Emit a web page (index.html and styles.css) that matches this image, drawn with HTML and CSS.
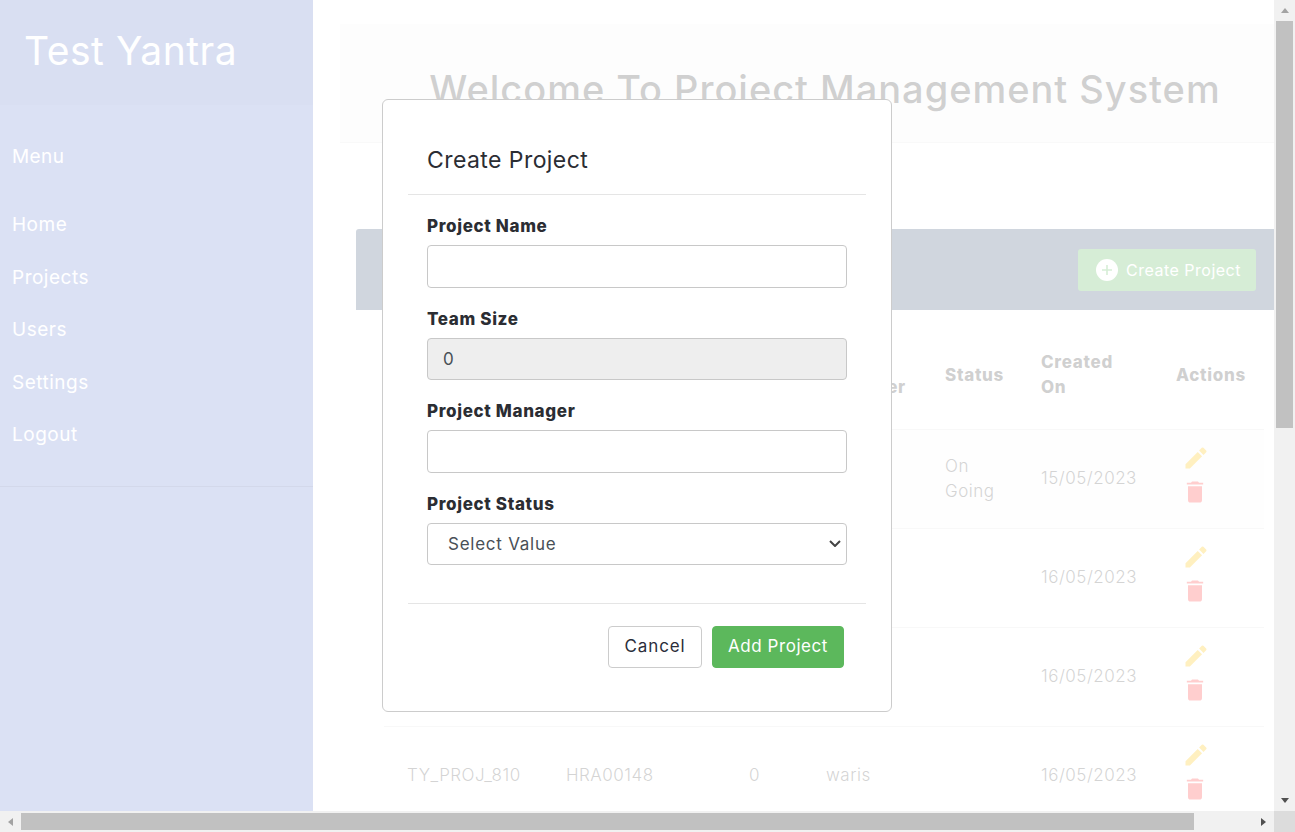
FILE: index.html
```html
<!DOCTYPE html>
<html lang="en">
<head>
<meta charset="utf-8">
<title>Project Management System</title>
<link rel="stylesheet" href="styles.css">
</head>
<body>
<div class="window">
  <div class="viewport">
    <div class="page">
      <aside class="sidebar">
        <div class="brand">Test Yantra</div>
        <nav class="nav">
          <div class="nav-label">Menu</div>
          <a class="nav-item">Home</a>
          <a class="nav-item">Projects</a>
          <a class="nav-item">Users</a>
          <a class="nav-item">Settings</a>
          <a class="nav-item">Logout</a>
        </nav>
      </aside>
      <main class="main">
        <header class="welcome"><h1>Welcome To Project Management System</h1></header>
        <section class="panel">
          <div class="panel-bar">
            <h2>All Projects</h2>
            <button class="create-btn">
              <svg class="plus" viewBox="0 0 22 22"><circle cx="11" cy="11" r="11" fill="#fff"/><path d="M11 6v10M6 11h10" stroke="#5cb85c" stroke-width="1.6"/></svg>
              Create Project
            </button>
          </div>
          <table class="table">
            <thead>
              <tr><th>Project Id</th><th>Project Name</th><th>Team Size</th><th>Project Manager</th><th>Status</th><th>Created On</th><th>Actions</th></tr>
            </thead>
            <tbody>
              <tr><td>TY_PROJ_807</td><td>HRA00145</td><td>0</td><td>waris</td><td>On Going</td><td>15/05/2023</td><td class="actions"><svg viewBox="0 0 24 24" class="edit"><path d="M3 17.25V21h3.75L17.2 10.55l-3.75-3.75zM20.7 7.04a1 1 0 0 0 0-1.41l-2.33-2.34a1 1 0 0 0-1.41 0l-2.3 2.3 3.75 3.75z"/></svg><svg viewBox="0 0 24 24" class="trash"><path d="M6 19c0 1.1.9 2 2 2h8c1.100 0 2-.9 2-2V7H6zM19 4h-3.500l-1-1h-5l-1 1H5v1.500h14z"/></svg></td></tr>
              <tr><td>TY_PROJ_808</td><td>HRA00146</td><td>0</td><td>waris</td><td></td><td>16/05/2023</td><td class="actions"><svg viewBox="0 0 24 24" class="edit"><path d="M3 17.25V21h3.75L17.2 10.55l-3.75-3.75zM20.7 7.04a1 1 0 0 0 0-1.41l-2.33-2.34a1 1 0 0 0-1.41 0l-2.3 2.3 3.75 3.75z"/></svg><svg viewBox="0 0 24 24" class="trash"><path d="M6 19c0 1.1.9 2 2 2h8c1.100 0 2-.9 2-2V7H6zM19 4h-3.500l-1-1h-5l-1 1H5v1.500h14z"/></svg></td></tr>
              <tr><td>TY_PROJ_809</td><td>HRA00147</td><td>0</td><td>waris</td><td></td><td>16/05/2023</td><td class="actions"><svg viewBox="0 0 24 24" class="edit"><path d="M3 17.25V21h3.75L17.2 10.55l-3.75-3.75zM20.7 7.04a1 1 0 0 0 0-1.41l-2.33-2.34a1 1 0 0 0-1.41 0l-2.3 2.3 3.75 3.75z"/></svg><svg viewBox="0 0 24 24" class="trash"><path d="M6 19c0 1.1.9 2 2 2h8c1.100 0 2-.9 2-2V7H6zM19 4h-3.500l-1-1h-5l-1 1H5v1.500h14z"/></svg></td></tr>
              <tr><td>TY_PROJ_810</td><td>HRA00148</td><td>0</td><td>waris</td><td></td><td>16/05/2023</td><td class="actions"><svg viewBox="0 0 24 24" class="edit"><path d="M3 17.25V21h3.75L17.2 10.55l-3.75-3.75zM20.7 7.04a1 1 0 0 0 0-1.41l-2.33-2.34a1 1 0 0 0-1.41 0l-2.3 2.3 3.75 3.75z"/></svg><svg viewBox="0 0 24 24" class="trash"><path d="M6 19c0 1.1.9 2 2 2h8c1.100 0 2-.9 2-2V7H6zM19 4h-3.500l-1-1h-5l-1 1H5v1.500h14z"/></svg></td></tr>
            </tbody>
          </table>
        </section>
      </main>
    </div>
    <div class="backdrop"></div>
    <div class="modal-wrap">
      <form class="modal">
        <div class="modal-head"><h3>Create Project</h3></div>
        <div class="modal-body">
          <div class="group"><label>Project Name</label><input class="field" type="text"></div>
          <div class="group"><label>Team Size</label><input class="field readonly" type="text" value="0" readonly></div>
          <div class="group"><label>Project Manager</label><input class="field" type="text"></div>
          <div class="group"><label>Project Status</label><select class="field select"><option>Select Value</option></select></div>
        </div>
        <div class="modal-foot">
          <button type="button" class="btn cancel">Cancel</button>
          <button type="button" class="btn add">Add Project</button>
        </div>
      </form>
    </div>
  </div>
  <div class="vbar">
    <span class="arrow up"></span>
    <span class="vthumb"></span>
    <span class="arrow down"></span>
  </div>
  <div class="hbar">
    <span class="arrow left"></span>
    <span class="hthumb"></span>
    <span class="arrow right"></span>
  </div>
  <div class="corner"></div>
</div>
</body>
</html>
```
FILE: styles.css
```css
* { box-sizing: border-box; }
html, body { margin: 0; height: 100%; overflow: hidden; }
body { font-family: "Inter", "Open Sans", sans-serif; color: #212529; background: #fff; }

.window {
  display: grid;
  grid-template-columns: 1274px 21px;
  grid-template-rows: 811px 21px;
  width: 1295px;
  height: 832px;
}
.viewport { position: relative; overflow: hidden; background: #fff; }
.page { display: flex; height: 100%; }

/* Sidebar */
.sidebar { flex: 0 0 313px; background: #6f87d3; color: #fff; }
.brand {
  height: 105px;
  padding: 28px 0 0 24px;
  background: #6780cb;
  font-size: 39px;
  line-height: 46px;
  letter-spacing: 0.55px;
}
.nav { height: 382px; padding-top: 39px; border-bottom: 1px solid #4f66ac; }
.nav-label { font-size: 19px; line-height: 26px; padding-left: 12px; margin-bottom: 42px; letter-spacing: 0.4px; }
.nav-item { display: block; font-size: 19px; line-height: 26px; padding-left: 12px; margin-bottom: 26.500px; letter-spacing: 0.5px; }

/* Main content */
.main { flex: 1 1 0; min-width: 0; overflow: hidden; padding: 24px 0 0 27px; }
.welcome {
  width: 970px;
  height: 119px;
  background: #f8f8f8;
  border-bottom: 1px solid #e8e8e8;
  text-align: center;
  padding-top: 41px;
}
.welcome h1 { margin: 0; font-size: 38px; line-height: 48px; font-weight: 500; letter-spacing: 0.97px; color: #444; white-space: nowrap; }
.panel { margin: 86px 0 0 16px; }
.panel-bar {
  display: flex;
  align-items: center;
  justify-content: space-between;
  height: 81px;
  padding: 0 18px 0 40px;
  background: #435b7b;
  border-radius: 3px 0 0 0;
}
.panel-bar h2 { margin: 0; font-size: 20px; font-weight: 500; color: #fff; }
.create-btn {
  display: flex;
  align-items: center;
  gap: 8px;
  width: 178px;
  height: 42px;
  padding: 0 0 0 18px;
  border: 0;
  border-radius: 3px;
  background: #5cb85c;
  color: #fff;
  font: 400 16px "Inter", sans-serif;
  letter-spacing: 0.5px;
  white-space: nowrap;
}
.plus { width: 22px; height: 22px; flex: none; }

.table { border-collapse: collapse; table-layout: fixed; width: 880px; margin-left: 28px; color: #555; font-size: 17px; }
.table th, .table td { padding: 0 0 0 23px; text-align: left; border-bottom: 1px solid #e4e4e4; line-height: 25px; }
.table th { height: 119px; padding: 12px 20px 0 23px; font-weight: 800; color: #444; letter-spacing: 0.7px; }
.table td { height: 99px; font-weight: 300; letter-spacing: 0.5px; }
.table th:nth-child(1) { width: 159px; }
.table th:nth-child(2) { width: 183px; }
.table th:nth-child(3) { width: 77px; }
.table th:nth-child(4) { width: 119px; }
.table th:nth-child(5) { width: 96px; }
.table th:nth-child(6) { width: 135px; }
.table th:nth-child(7) { width: 111px; padding-right: 0; }
.table tbody tr:first-child { background: #f9f9f9; }
.table td.actions { padding-bottom: 7px; }
.actions svg { display: block; width: 28px; height: 28px; margin-left: 5px; }
.actions .edit { fill: #ffc107; margin: 0 0 6px 6px; }
.trash { fill: #ff3f3f; }

/* Overlay + modal */
.backdrop { position: absolute; inset: 0; background: rgba(255, 255, 255, 0.75); }
.modal-wrap { position: absolute; inset: 0; padding-top: 99px; display: flex; justify-content: center; align-items: flex-start; }
.modal {
  width: 510px;
  height: 613px;
  padding: 0 25px;
  background: #fff;
  border: 1px solid #ccc;
  border-radius: 6px;
}
.modal-head { padding: 43px 19px 16px; border-bottom: 1px solid #e5e5e5; }
.modal-head h3 { margin: 0; font-size: 23px; line-height: 35px; font-weight: 400; letter-spacing: 0.43px; color: #2b2d33; }
.modal-body { padding: 18px 19px 20px; border-bottom: 1px solid #e5e5e5; }
.group { margin-bottom: 18px; }
.group label { display: block; font-size: 17px; line-height: 26px; font-weight: 800; margin-bottom: 6px; letter-spacing: 0.65px; color: #2b2d33; }
.field {
  display: block;
  width: 100%;
  height: 42.500px;
  padding: 0 15px;
  border: 1px solid #c8c8c8;
  border-radius: 4px;
  background: #fff;
  font: 400 17px "Inter", sans-serif;
  color: #495057;
}
.readonly { background: #eee; }
.select {
  appearance: none;
  padding-left: 20px;
  letter-spacing: 0.75px;
  background-image: url("data:image/svg+xml,%3Csvg xmlns='http://www.w3.org/2000/svg' width='12' height='7'%3E%3Cpath d='M1 1l5 5 5-5' fill='none' stroke='%23444' stroke-width='2'/%3E%3C/svg%3E");
  background-repeat: no-repeat;
  background-position: right 5px center;
}
.modal-foot { display: flex; justify-content: flex-end; gap: 10px; padding: 22px 22px 0 0; }
.btn { height: 42px; padding-bottom: 3px; border-radius: 4px; font: 400 17px "Inter", sans-serif; }
.cancel { width: 94px; background: #fff; border: 1px solid #ccc; color: #2b2d3a; letter-spacing: 0.9px; }
.add { width: 132px; background: #5cb85c; border: 1px solid #5cb85c; color: #fff; letter-spacing: 0.55px; }

/* Scrollbars */
.vbar, .hbar { display: flex; background: #f1f1f1; }
.vbar { flex-direction: column; align-items: center; }
.hbar { align-items: center; }
.vthumb { width: 17px; height: 407px; background: #c1c1c1; margin-bottom: auto; }
.hthumb { height: 17px; width: 1173px; background: #c1c1c1; margin-right: auto; }
.corner { background: #dcdcdc; }
.arrow { flex: none; display: flex; width: 21px; height: 21px; align-items: center; justify-content: center; }
.arrow::before { content: ""; width: 0; height: 0; border-style: solid; border-color: transparent; }
.up::before { border-width: 0 4.500px 5px; border-bottom-color: #a3a3a3; }
.down::before { border-width: 5px 4.500px 0; border-top-color: #505050; }
.left::before { border-width: 4.500px 5px 4.500px 0; border-right-color: #a3a3a3; }
.right::before { border-width: 4.500px 0 4.500px 5px; border-left-color: #505050; }
```
